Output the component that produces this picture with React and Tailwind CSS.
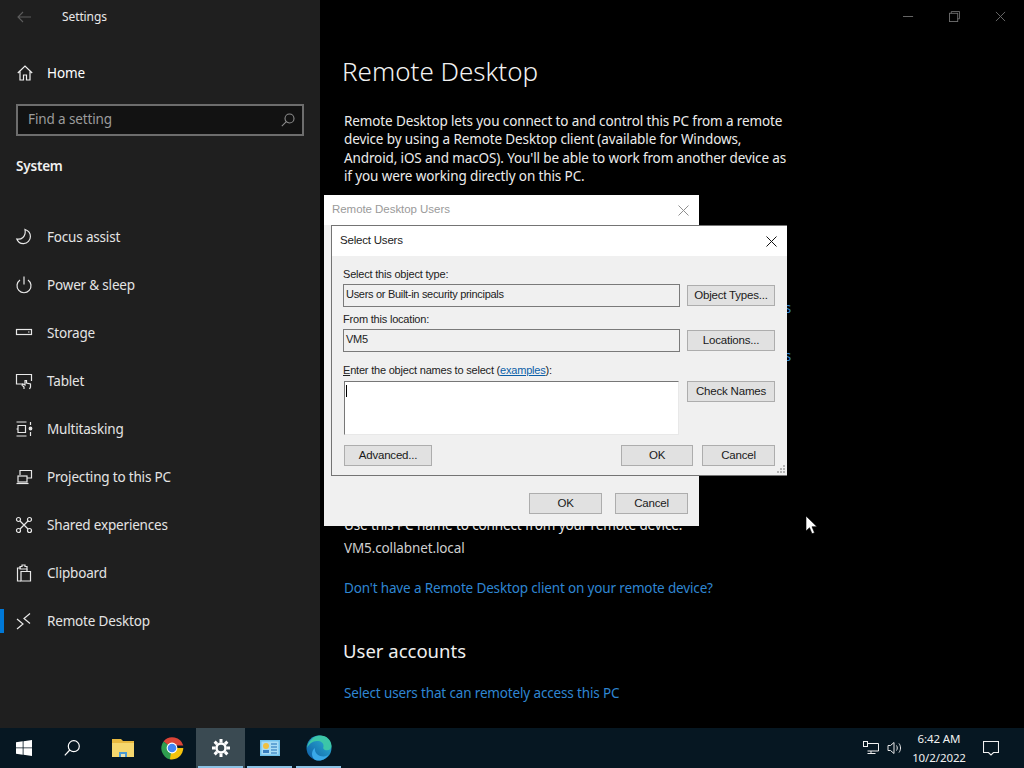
import React from "react";

const ui = { fontFamily: '"Noto Sans", "Open Sans", sans-serif' };
const dlg = { fontFamily: '"Liberation Sans", "Noto Sans", sans-serif' };

const S = ({ children, w = 20, h = 20, vb = "0 0 20 20", cls = "" }) => (
  <svg width={w} height={h} viewBox={vb} fill="none" stroke="currentColor" strokeWidth="1.2" className={cls}>
    {children}
  </svg>
);

const icons = {
  moon: <path d="M11 2.5c3 1 5.4 3.6 5.4 7A7 7 0 0 1 9.6 16.6 7 7 0 0 1 2.8 12c4 1 9.6-2 8.2-9.5Z" />,
  power: <><path d="M6 5a7 7 0 1 0 8 0" /><path d="M10 1.5v8" /></>,
  storage: <><rect x="2.5" y="6.5" width="15" height="5" /><path d="M14 9h1.5" /></>,
  tablet: <><path d="M9 13H2.5V3.5h15V10" /><path d="M10 18v-2l-2-2 1-1 2 1V9.500h1.500V12l4 1v3l-1 2" /></>,
  multi: <><path d="M2.500 3h10M2.500 17h10M4 6.500h7.500v7H4zM2.500 10h1M16.500 3v3M16.500 13v4" /><circle cx="16.500" cy="9.500" r="1.300" fill="currentColor" /></>,
  project: <><path d="M6 8V3.500h11.500V11H13" /><rect x="4" y="9" width="9" height="6" /><path d="M2.500 16.500h12" /></>,
  shared: <><circle cx="4.500" cy="4.500" r="2" /><circle cx="15.500" cy="4.500" r="2" /><circle cx="4.500" cy="15.500" r="2" /><circle cx="15.500" cy="15.500" r="2" /><path d="m6 6 8 8M14 6l-8 8" /></>,
  clip: <><path d="M7 5H3.500v13H7" /><path d="M7 8.500h9.500V18H7zM6 5V3.500h2V2h3v1.500h2V6H6z" /><path d="M13 6v2.500" /></>,
  remote: <><path d="m3 8 6 5-6 5" /><path d="m16 2.500-6 5 6 5" /></>,
};

const items = [
  ["Focus assist", "moon"],
  ["Power & sleep", "power"],
  ["Storage", "storage"],
  ["Tablet", "tablet"],
  ["Multitasking", "multi"],
  ["Projecting to this PC", "project"],
  ["Shared experiences", "shared"],
  ["Clipboard", "clip"],
  ["Remote Desktop", "remote"],
];

function NavRow({ label, icon }) {
  const active = label === "Remote Desktop";
  return (
    <div className="relative flex h-12 items-center pl-[14px] text-[13.500px] tracking-[-0.18px] text-[#e4e4e4]">
      {active && <div className="absolute left-0 top-3 h-6 w-1 bg-[#0078d7]" />}
      <S cls="text-[#e8e8e8]">{icons[icon]}</S>
      <span className="ml-[13px]">{label}</span>
    </div>
  );
}

function Sidebar() {
  return (
    <aside className="flex w-[320px] shrink-0 flex-col bg-[#1f1f1f] text-white">
      <div className="flex h-8 items-center pl-[17px] pt-[1px]">
        <svg width="14" height="12" viewBox="0 0 14 12" fill="none" stroke="#5c5c5c" strokeWidth="1.100">
          <path d="M14 6H1M6 1 1 6l5 5" />
        </svg>
        <span className="ml-[31px] text-[12px] tracking-[-0.1px] text-[#e8e8e8]">Settings</span>
      </div>
      <div className="mt-[17px] flex h-12 items-center pl-[17px] text-[13.500px] tracking-[-0.12px]">
        <svg width="16" height="16" viewBox="0 0 16 16" fill="none" stroke="#f0f0f0" strokeWidth="1.200">
          <path d="M.8 8 8 1l7.200 7M3 6.500v8.500h3.500v-5h3v5H13V6.500" />
        </svg>
        <span className="ml-[14px]">Home</span>
      </div>
      <div className="mx-4 mt-[7px] flex h-8 items-center justify-between border-2 border-[#6d6d6d] bg-[#121212] pl-[10px] pr-[7px] text-[13.500px] tracking-[-0.12px] text-[#9c9c9c]">
        <span className="pb-[1px]">Find a setting</span>
        <svg width="14" height="14" viewBox="0 0 14 14" fill="none" stroke="#8c8c8c" strokeWidth="1.100">
          <circle cx="8.500" cy="5.500" r="4.500" />
          <path d="M5.300 8.700.8 13.200" />
        </svg>
      </div>
      <div className="ml-4 mt-[20px] text-[13.500px] font-semibold leading-[20px] tracking-[-0.2px] text-[#f0f0f0]">System</div>
      <div className="mt-[37px]">
        {items.map(([l, i]) => (
          <NavRow key={l} label={l} icon={i} />
        ))}
      </div>
    </aside>
  );
}

function Content() {
  const link = "text-[13.500px] tracking-[-0.15px] text-[#2f86d2]";
  return (
    <main className="flex-1 bg-black pl-[22px] text-white">
      <div className="flex h-8 items-center justify-end gap-[35px] pr-[18px] text-[#6f6f6f]">
        <svg width="11" height="11" viewBox="0 0 12 12" stroke="currentColor"><path d="M0 6h11" /></svg>
        <svg width="11" height="11" viewBox="0 0 12 12" fill="none" stroke="currentColor"><path d="M2.500 2.500V.5h9v8h-2" /><rect x=".5" y="2.500" width="9" height="9" /></svg>
        <svg width="11" height="11" viewBox="0 0 12 12" stroke="currentColor"><path d="m1 1 10 10M11 1 1 11" /></svg>
      </div>
      <h1 className="mt-[19px] text-[26px] font-light leading-[40px] text-[#f2f2f2]">Remote Desktop</h1>
      <p className="ml-[2px] mt-[21px] w-[450px] text-[13.500px] leading-[18.400px] tracking-[-0.12px] text-[#ececec]">
        Remote Desktop lets you connect to and control this PC from a remote device by using a Remote Desktop client (available for Windows, Android, iOS and macOS). You'll be able to work from another device as if you were working directly on this PC.
      </p>
      <div className={`ml-[2px] mt-[112px] w-[447px] text-right leading-5 ${link}`}>Show settings</div>
      <div className={`ml-[2px] mt-[28px] w-[447px] text-right leading-5 ${link}`}>Show settings</div>
      <div className="ml-[2px] mt-[149px] text-[13.500px] leading-5 tracking-[-0.12px] text-[#e8e8e8]">Use this PC name to connect from your remote device:</div>
      <div className="ml-[2px] mt-[3px] text-[13.500px] leading-5 tracking-[-0.12px] text-[#cfcfcf]">VM5.collabnet.local</div>
      <div className={`ml-[2px] mt-[20px] leading-5 ${link}`}>Don't have a Remote Desktop client on your remote device?</div>
      <h2 className="ml-[1px] mt-[39px] text-[18.500px] leading-7 text-[#efefef]">User accounts</h2>
      <div className={`ml-[2px] mt-[18px] leading-5 ${link}`}>Select users that can remotely access this PC</div>
    </main>
  );
}

const Btn = ({ children, cls = "" }) => (
  <div className={`flex h-[21px] items-center justify-center border border-[#adadad] bg-[#e1e1e1] text-[11.500px] tracking-[-0.2px] text-[#1a1a1a] ${cls}`}>
    {children}
  </div>
);

const Field = ({ children }) => (
  <div className="flex h-[23px] w-[337px] items-center border border-[#7a7a7a] bg-[#f0f0f0] pb-[2px] pl-[2px] text-[11px] tracking-[-0.3px] text-[#222]">
    {children}
  </div>
);

const Close = ({ color, size = 11 }) => (
  <svg width={size} height={size} viewBox="0 0 11 11" stroke={color} strokeWidth="1">
    <path d="m.5.5 10 10M10.500.5l-10 10" />
  </svg>
);

function SelectUsers() {
  return (
    <div style={dlg} className="absolute left-[331px] top-[225px] flex h-[251px] w-[456px] flex-col border-b border-l border-t border-[#747474] bg-[#f0f0f0]">
      <div className="flex h-[30px] shrink-0 items-center justify-between bg-white pl-2 pr-[10px] text-[11.500px] tracking-[-0.2px] text-[#222]">
        <span>Select Users</span>
        <Close color="#111" />
      </div>
      <div className="relative flex-1">
        <div className="flex">
          <div className="ml-[11px] flex w-[337px] flex-col text-[11px] tracking-[-0.2px] text-[#222]">
            <div className="mt-[9px] h-[19px] leading-[19px]">Select this object type:</div>
            <Field>Users or Built-in security principals</Field>
            <div className="mt-[3px] h-[19px] leading-[19px]">From this location:</div>
            <Field>VM5</Field>
            <div className="mt-[8px] h-[20px] leading-[20px]"><span className="underline">E</span>nter the object names to select (<span className="text-[#0b5fa8] underline">examples</span>):</div>
            <div className="relative ml-[1px] mt-[1px] h-[54px] w-[335px] border-b border-l border-r border-t border-b-[#e8e8e8] border-l-[#777] border-r-[#e8e8e8] border-t-[#777] bg-white">
              <div className="absolute left-[1px] top-[3px] h-[12px] w-px bg-black" />
            </div>
          </div>
          <div className="ml-[7px] flex w-[88px] flex-col">
            <Btn cls="mt-[29px]">Object Types...</Btn>
            <Btn cls="mt-[24px]">Locations...</Btn>
            <Btn cls="mt-[30px]">Check Names</Btn>
          </div>
        </div>
        <div className="ml-[12px] mr-[12px] mt-[10px] flex">
          <Btn cls="w-[88px]">Advanced...</Btn>
          <Btn cls="ml-auto w-[72px]">OK</Btn>
          <Btn cls="ml-[9px] w-[73px]">Cancel</Btn>
        </div>
        <svg className="absolute bottom-[1px] right-[1px]" width="10" height="10" viewBox="0 0 10 10" fill="#b5b5b5">
          <rect x="7" y="1" width="2" height="2" /><rect x="4" y="4" width="2" height="2" /><rect x="7" y="4" width="2" height="2" /><rect x="1" y="7" width="2" height="2" /><rect x="4" y="7" width="2" height="2" /><rect x="7" y="7" width="2" height="2" />
        </svg>
      </div>
    </div>
  );
}

function OuterDialog() {
  return (
    <div style={dlg} className="absolute left-[324px] top-[195px] flex h-[331px] w-[375px] flex-col bg-[#f0f0f0]">
      <div className="flex h-[30px] shrink-0 items-center justify-between bg-white pl-2 pr-[10px] text-[11.500px] tracking-[-0.05px] text-[#9a9a9a]">
        <span>Remote Desktop Users</span>
        <Close color="#8f8f8f" />
      </div>
      <div className="mt-auto mb-3 mr-[11px] flex justify-end gap-[13px]">
        <Btn cls="w-[73px]">OK</Btn>
        <Btn cls="w-[73px]">Cancel</Btn>
      </div>
    </div>
  );
}

function Taskbar() {
  const Tile = ({ children, active, line }) => (
    <div className={`relative flex h-10 w-[49px] items-center justify-center ${active ? "bg-[#3a4a52]" : ""}`}>
      {children}
      {line && <div className="absolute bottom-0 left-[2px] right-[2px] h-[2px] bg-[#8cc3e6]" />}
    </div>
  );
  return (
    <footer className="flex h-10 items-center bg-[#061722] text-white">
      <Tile>
        <svg width="16" height="16" viewBox="0 0 16 16" fill="#fff" className="mr-[1px]">
          <path d="M0 2.300 6.700 1.300V7.500H0ZM7.500 1.200 16 0V7.500H7.500ZM0 8.300H6.700V14.700L0 13.700ZM7.500 8.300H16V16L7.500 14.800Z" />
        </svg>
      </Tile>
      <Tile>
        <svg width="16" height="16" viewBox="0 0 16 16" fill="none" stroke="#fff" strokeWidth="1.200" className="mr-[3px]">
          <circle cx="9.800" cy="6.200" r="5.500" />
          <path d="M5.800 10 .8 15.300" />
        </svg>
      </Tile>
      <Tile>
        <svg width="22" height="20" viewBox="0 0 22 20">
          <path d="M0 1h9l2 2h11v16H0Z" fill="#e8b93f" />
          <path d="M0 5h22v14H0Z" fill="#f5d76e" />
          <path d="M7 14h8v5H7Z" fill="#4a9ad4" />
          <path d="M9 16h4v3H9Z" fill="#e8e0b0" />
        </svg>
      </Tile>
      <Tile>
        <svg width="24" height="24" viewBox="0 0 24 24">
          <path d="M12 12 3.500 5.500A11.500 11.500 0 0 1 23.300 9.500H12Z" fill="#db4437" />
          <path d="M12 12 3.500 5.500A11.500 11.500 0 0 0 9.800 23.300L14.500 15Z" fill="#2f9e4f" />
          <path d="M12 12h11.300A11.500 11.500 0 0 1 9.800 23.300Z" fill="#f4c20d" />
          <circle cx="12" cy="12" r="5.400" fill="#fff" />
          <circle cx="12" cy="12" r="4.300" fill="#4285f4" />
        </svg>
      </Tile>
      <Tile active line>
        <svg width="20" height="20" viewBox="0 0 20 20" fill="none" stroke="#fff">
          <circle cx="10" cy="10" r="4.500" strokeWidth="2.500" />
          <path d="M10 1v3.500M10 15.500V19M1 10h3.500M15.500 10H19M3.600 3.600l2.500 2.500M13.900 13.900l2.500 2.500M16.400 3.600l-2.500 2.500M6.100 13.900l-2.500 2.500" strokeWidth="3" />
        </svg>
      </Tile>
      <Tile line>
        <svg width="20" height="16" viewBox="0 0 20 16">
          <rect width="20" height="16" fill="#6fc1ec" />
          <rect x="1.500" y="1.500" width="17" height="13" fill="#a8dcf5" />
          <circle cx="6" cy="6" r="3" fill="#f0c040" />
          <path d="M3 10h6v3H3Z" fill="#3a7fc0" />
          <path d="M11 4h6M11 7h6M11 10h6M11 13h6" stroke="#1f6fb8" strokeWidth="1.200" />
        </svg>
      </Tile>
      <Tile line>
        <svg width="26" height="26" viewBox="0 0 26 26">
          <defs>
            <linearGradient id="eg" x1="0" y1="1" x2="1" y2="0">
              <stop offset="0" stopColor="#0c59a4" />
              <stop offset="1" stopColor="#2fb8d8" />
            </linearGradient>
          </defs>
          <circle cx="13" cy="13" r="12.500" fill="url(#eg)" />
          <path d="M1 13C2 6 8 .5 14 .5c7 0 11.500 5 11.500 10.500 0 3.500-3.500 5-6.500 4-2-.7-2-2-1.500-3.500C18 8 15 6 11 6 6.500 6 3 9 1 13Z" fill="#3cc6a8" />
          <path d="M9 13c-1 5 4 8.500 8.500 8.500 2.500 0 4.500-1 5.500-3-2 4.500-6 7-10 7-2.500 0-4-.5-5-1.500C5 21 5.500 15.500 9 13Z" fill="#39a9e8" />
        </svg>
      </Tile>
      <div className="ml-auto flex h-10 items-center">
        <svg width="16" height="14" viewBox="0 0 16 14" fill="none" stroke="#f0f0f0" className="mr-[8px]">
          <path d="M4.500 2.500h11v7.500h-11M8 10v2.500M4.500 12.500h8" />
          <rect x=".5" y=".5" width="4" height="5" />
        </svg>
        <svg width="16" height="14" viewBox="0 0 16 14" fill="none" stroke="#e8e8e8" className="mr-[4px]">
          <path d="M1 4.500h2.500L7 1.500v11L3.500 9.500H1ZM9.500 4.500c1 1.500 1 3.500 0 5M12 2.500c2 2.500 2 6.500 0 9" />
        </svg>
        <div style={ui} className="flex w-[64px] flex-col items-center text-[11.500px] leading-[19px] tracking-[-0.1px] text-[#f0f0f0]">
          <span>6:42 AM</span>
          <span>10/2/2022</span>
        </div>
        <svg width="16" height="16" viewBox="0 0 16 16" fill="none" stroke="#f0f0f0" strokeWidth="1.100" className="ml-[12px] mr-[25px]">
          <path d="M.5 1.500h15v11h-5L8 15l-2.500-2.500h-5Z" />
        </svg>
      </div>
    </footer>
  );
}

export default function App() {
  return (
    <div style={ui} className="relative flex h-[768px] w-[1024px] flex-col overflow-hidden bg-black">
      <div className="flex h-[728px]">
        <Sidebar />
        <Content />
      </div>
      <Taskbar />
      <OuterDialog />
      <SelectUsers />
      <svg className="absolute left-[805px] top-[515px]" width="13" height="20" viewBox="0 0 13 20">
        <path d="M1 1v15l3.500-3.300 2.500 6 2.500-1-2.500-6H12Z" fill="#fff" stroke="#000" strokeWidth=".6" />
      </svg>
    </div>
  );
}
